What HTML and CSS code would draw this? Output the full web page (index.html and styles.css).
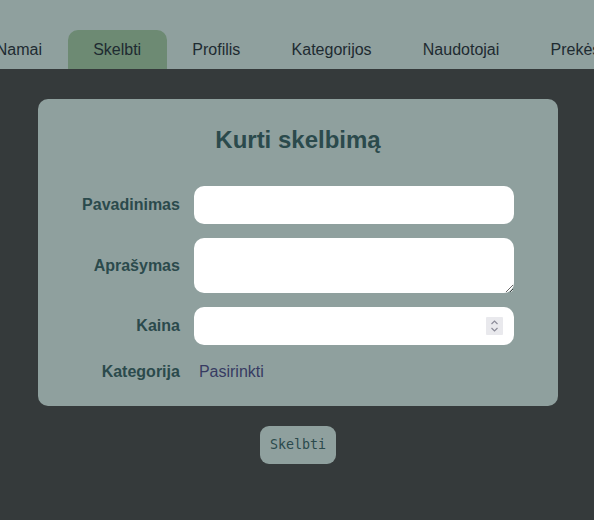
FILE: index.html
```html
<!DOCTYPE html>
<html lang="lt">
<head>
<meta charset="utf-8">
<title>Kurti skelbimą</title>
<link rel="stylesheet" href="styles.css">
</head>
<body>
<nav class="nav">
  <a class="nav-item" href="#">Namai</a>
  <a class="nav-item active" href="#">Skelbti</a>
  <a class="nav-item" href="#">Profilis</a>
  <a class="nav-item" href="#">Kategorijos</a>
  <a class="nav-item" href="#">Naudotojai</a>
  <a class="nav-item" href="#">Prekės</a>
</nav>
<main class="main">
  <form class="card">
    <h2 class="title">Kurti skelbimą</h2>
    <div class="grid">
      <label class="label" for="pav">Pavadinimas</label>
      <input class="field" id="pav" type="text">
      <label class="label" for="apr">Aprašymas</label>
      <textarea class="field area" id="apr"></textarea>
      <label class="label" for="kaina">Kaina</label>
      <div class="num-wrap">
        <input class="field num" id="kaina" type="number">
        <span class="spin" aria-hidden="true">
          <svg width="17" height="18" viewBox="0 0 17 18">
            <path d="M5.5 7 L8.5 4 L11.5 7" fill="none" stroke="#8c8c99" stroke-width="1.2"/>
            <path d="M5.5 11 L8.5 14 L11.5 11" fill="none" stroke="#8c8c99" stroke-width="1.2"/>
          </svg>
        </span>
      </div>
      <span class="label">Kategorija</span>
      <span class="value">Pasirinkti</span>
    </div>
  </form>
  <button class="submit" type="button">Skelbti</button>
</main>
</body>
</html>
```
FILE: styles.css
```css
html, body {
  margin: 0;
  padding: 0;
}
body {
  background: #353a3b;
  font-family: "Liberation Sans", Arial, sans-serif;
  font-size: 16px;
  min-height: 520px;
}
.nav {
  display: flex;
  justify-content: center;
  padding-top: 30px;
  padding-left: 2px;
  background: #8fa09e;
  overflow: hidden;
}
.nav-item {
  flex: none;
  padding: 10px 25.6px;
  line-height: 19px;
  color: #1e2b31;
  text-decoration: none;
  border-radius: 10px 10px 0 0;
  white-space: nowrap;
}
.nav-item.active {
  background: #6d8a73;
}
.main {
  display: flex;
  flex-direction: column;
  align-items: center;
  padding-top: 30px;
  padding-left: 2px;
}
.card {
  box-sizing: border-box;
  width: 520px;
  background: #8fa09e;
  border-radius: 10px;
  padding: 27px 0 21px;
}
.title {
  margin: 0 0 32px;
  font-size: 24px;
  font-weight: bold;
  text-align: center;
  color: #2b4a4c;
}
.grid {
  display: grid;
  grid-template-columns: auto 320px;
  justify-content: center;
  column-gap: 14px;
  row-gap: 14px;
  align-items: center;
}
.label {
  justify-self: end;
  font-weight: bold;
  color: #2b4a4c;
}
.field {
  box-sizing: border-box;
  width: 320px;
  height: 38px;
  border: none;
  border-radius: 10px;
  background: #ffffff;
  padding: 0 10px;
  font-family: "Liberation Sans", Arial, sans-serif;
  font-size: 16px;
  margin: 0;
  display: block;
}
.area {
  height: 55px;
  padding: 8px 10px;
  resize: both;
}
.num-wrap {
  position: relative;
  width: 320px;
  height: 38px;
}
.num::-webkit-inner-spin-button,
.num::-webkit-outer-spin-button {
  -webkit-appearance: none;
  margin: 0;
}
.spin {
  position: absolute;
  right: 11px;
  top: 10px;
  width: 17px;
  height: 18px;
  background: #e9e9ed;
  border-radius: 1px;
  display: block;
}
.spin svg {
  display: block;
}
.value {
  padding: 4px 5px;
  line-height: 18px;
  color: #373b62;
}
.submit {
  margin-top: 20px;
  padding: 10px 10px;
  line-height: 18px;
  border: none;
  border-radius: 9px;
  background: #8fa09e;
  color: #2b4a4c;
  font-family: "DejaVu Sans Mono", monospace;
  font-size: 13.33px;
}
```
